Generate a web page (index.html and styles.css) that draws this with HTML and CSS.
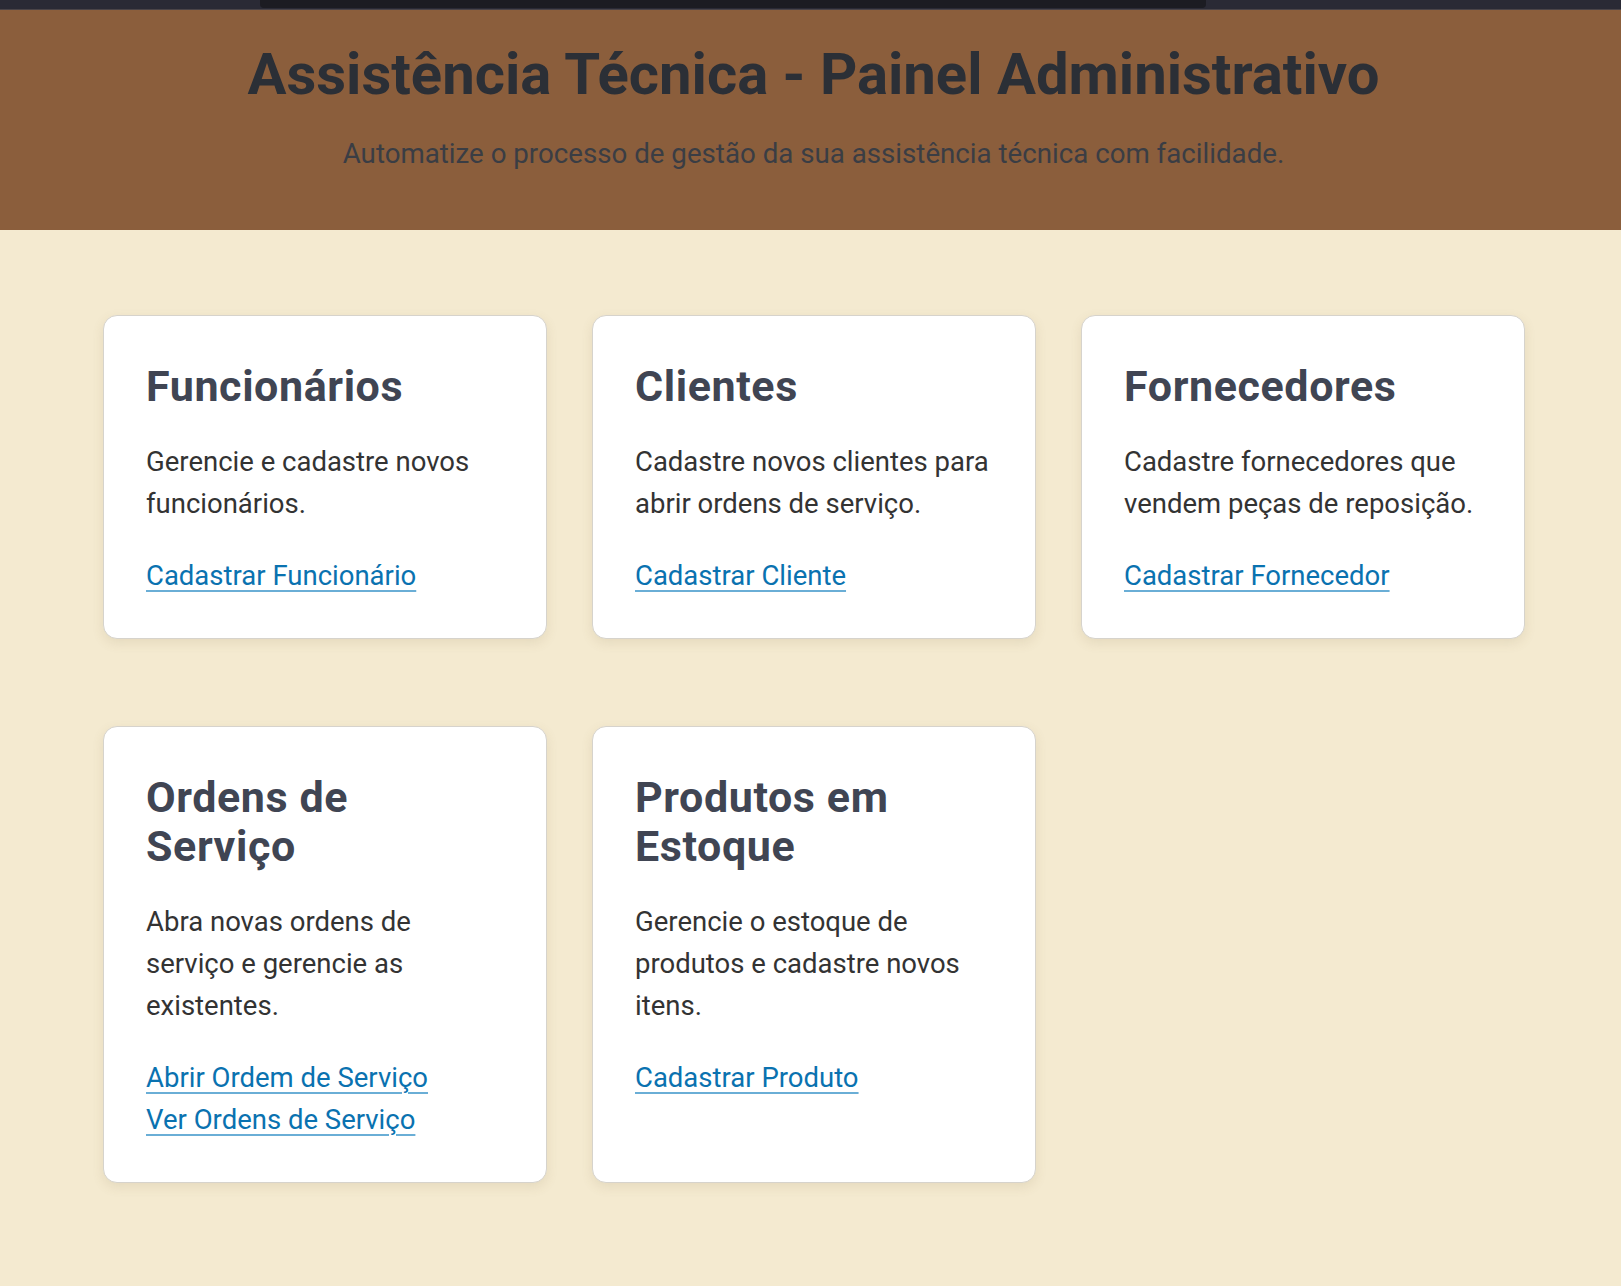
FILE: index.html
```html
<!DOCTYPE html>
<html lang="pt-BR">
<head>
<meta charset="utf-8">
<title>Assistência Técnica - Painel Administrativo</title>
<link rel="stylesheet" href="styles.css">
</head>
<body>
  <div class="topbar"><div class="topbar-inner"></div></div>
  <header class="hero">
    <h1 class="hero-title">Assistência Técnica - Painel Administrativo</h1>
    <p class="hero-sub">Automatize o processo de gestão da sua assistência técnica com facilidade.</p>
  </header>
  <main class="dashboard">
    <section class="card">
      <h2 class="card-title">Funcionários</h2>
      <p class="card-text">Gerencie e cadastre novos funcionários.</p>
      <div class="card-links"><a href="#" class="card-link">Cadastrar Funcionário</a></div>
    </section>
    <section class="card">
      <h2 class="card-title">Clientes</h2>
      <p class="card-text">Cadastre novos clientes para abrir ordens de serviço.</p>
      <div class="card-links"><a href="#" class="card-link">Cadastrar Cliente</a></div>
    </section>
    <section class="card">
      <h2 class="card-title">Fornecedores</h2>
      <p class="card-text">Cadastre fornecedores que vendem peças de reposição.</p>
      <div class="card-links"><a href="#" class="card-link">Cadastrar Fornecedor</a></div>
    </section>
    <section class="card">
      <h2 class="card-title">Ordens de Serviço</h2>
      <p class="card-text">Abra novas ordens de serviço e gerencie as existentes.</p>
      <div class="card-links">
        <a href="#" class="card-link">Abrir Ordem de Serviço</a>
        <a href="#" class="card-link">Ver Ordens de Serviço</a>
      </div>
    </section>
    <section class="card">
      <h2 class="card-title">Produtos em Estoque</h2>
      <p class="card-text">Gerencie o estoque de produtos e cadastre novos itens.</p>
      <div class="card-links"><a href="#" class="card-link">Cadastrar Produto</a></div>
    </section>
  </main>
</body>
</html>
```
FILE: styles.css
```css
* { box-sizing: border-box; }

html, body {
  margin: 0;
  padding: 0;
}

body {
  background: #f4ead0;
  font-family: Roboto, "Noto Sans", "Liberation Sans", sans-serif;
  color: #333333;
  min-height: 1286px;
}

.topbar {
  height: 10px;
  background: #2a2a35;
  border-bottom: 1px solid #4a4448;
}

.topbar-inner {
  margin-left: 260px;
  width: 946px;
  height: 8px;
  background: #1c1c22;
  border-radius: 0 0 4px 4px;
}

.hero {
  background: #8b5e3c;
  text-align: center;
  padding: 30px 0 55px 6px;
}

.hero-title {
  margin: 0;
  font-size: 58px;
  line-height: 68px;
  font-weight: 700;
  color: #2b2f36;
}

.hero-sub {
  margin: 25px 0 0;
  font-size: 27.7px;
  line-height: 42px;
  font-weight: 400;
  color: #3a3d44;
}

.dashboard {
  display: grid;
  grid-template-columns: repeat(3, 1fr);
  column-gap: 45px;
  row-gap: 87px;
  padding: 85px 96px 60px 103px;
}

.card {
  background: #ffffff;
  border: 1px solid #d6d3cc;
  border-radius: 14px;
  box-shadow: 0 4px 12px rgba(120, 100, 60, 0.12);
  padding: 46px 42px 41px 42px;
}

.card-title {
  margin: 0 0 30px;
  font-size: 43px;
  line-height: 49px;
  font-weight: 700;
  letter-spacing: 0.6px;
  color: #404553;
}

.card-text {
  margin: 0 0 30px;
  font-size: 27.5px;
  line-height: 42px;
  color: #333333;
}

.card-links {
  display: flex;
  flex-direction: column;
  align-items: flex-start;
}

.card-link {
  font-size: 27.5px;
  line-height: 42px;
  color: #0a72b0;
  text-decoration: underline;
  text-decoration-color: #6aaed6;
  text-decoration-thickness: 2px;
  text-underline-offset: 5px;
}
```
